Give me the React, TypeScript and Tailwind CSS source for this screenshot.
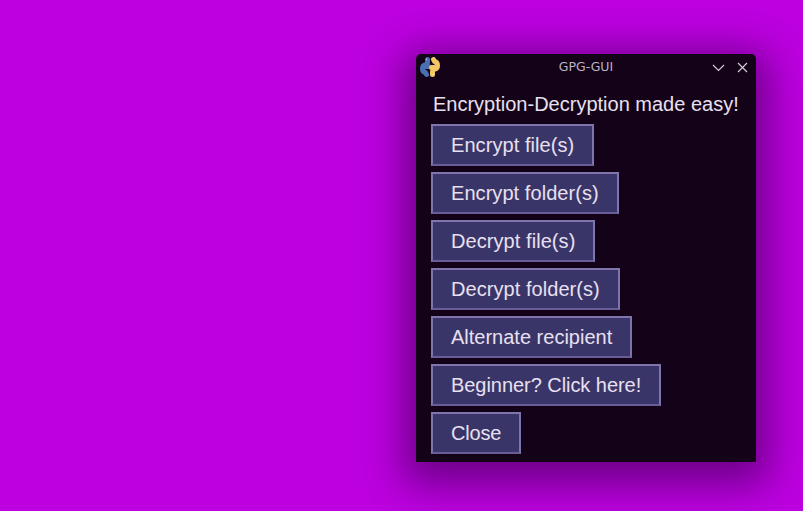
const BUTTONS = [
  { label: "Encrypt file(s)", spacing: "tracking-[0.07px]" },
  { label: "Encrypt folder(s)", spacing: "tracking-[0.06px]" },
  { label: "Decrypt file(s)", spacing: "tracking-[0.07px]" },
  { label: "Decrypt folder(s)", spacing: "tracking-[0.06px]" },
  { label: "Alternate recipient", spacing: "tracking-normal" },
  { label: "Beginner? Click here!", spacing: "tracking-[-0.05px]" },
  { label: "Close", spacing: "tracking-[-0.2px]" },
];

function PythonLogo() {
  const strand = "M8.500 3.500V6Q8.500 8.500 6 9Q3.500 9.500 3.500 12.500Q3.500 16 6.500 16.500L7.500 18.500M6 10.500H9.500";
  return (
    <svg width="22" height="22" viewBox="0 0 22 22" fill="none" strokeWidth="5" strokeLinecap="round" strokeLinejoin="round" className="shrink-0">
      <path d={strand} stroke="#4a70b4" />
      <path d={strand} stroke="#f3c765" transform="rotate(180 11 11)" />
      <circle cx="7.500" cy="3.500" r="0.700" fill="#b9c8e4" />
      <circle cx="14.500" cy="18.500" r="0.700" fill="#fff0c0" />
    </svg>
  );
}

export default function App() {
  return (
    <main className="relative h-[511px] w-[803px] overflow-hidden bg-[#bd00e0] font-['Liberation_Sans',sans-serif]">
      <section className="absolute left-[416px] top-[54px] flex h-[408px] w-[340px] flex-col rounded-t-[5px] bg-[#140318] text-[#e8e0f0] shadow-[0_10px_40px_12px_rgba(40,0,60,0.55)]">
        <header className="flex h-[26px] items-center justify-between pl-[3px] pr-[7px]">
          <PythonLogo />
          <span className="pl-[19px] pt-px font-['DejaVu_Sans',sans-serif] text-[12.5px] text-[#bdb2c4]">GPG-GUI</span>
          <div className="flex items-center gap-[11px]">
            <svg width="13" height="13" viewBox="0 0 13 13" fill="none" stroke="#d8d2dc" strokeWidth="1.100">
              <path d="M1 4l5.500 5.500L12 4" />
            </svg>
            <svg width="13" height="13" viewBox="0 0 13 13" fill="none" stroke="#d8d2dc" strokeWidth="1.100">
              <path d="M2 2l9 9M11 2l-9 9" />
            </svg>
          </div>
        </header>

        <div className="flex flex-col items-start gap-1.5 pl-[15px] pr-4">
          <p className="mt-3 mb-px pl-0.5 text-xl leading-[25px] whitespace-nowrap">Encryption-Decryption made easy!</p>
          {BUTTONS.map(({ label, spacing }) => (
            <button
              key={label}
              className={`h-[42px] border-2 border-[#7d75ac] border-b-[#665e94] bg-[#3a3568] px-[18px] text-xl text-[#e8e0f0] ${spacing}`}
            >
              {label}
            </button>
          ))}
        </div>
      </section>
    </main>
  );
}
